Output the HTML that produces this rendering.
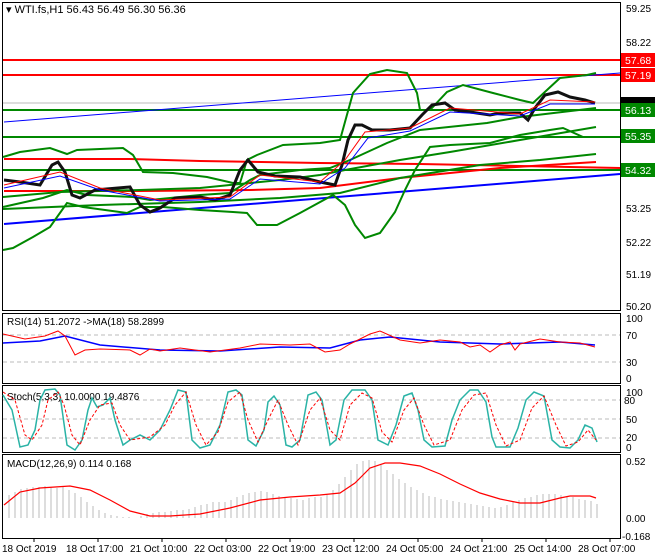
<!DOCTYPE html>
<html><head><meta charset="utf-8"><style>
body{margin:0;background:#fff;}
svg{display:block;font-family:"Liberation Sans",sans-serif;font-size:10px;}
</style></head><body>
<svg width="660" height="560" viewBox="0 0 660 560">
<rect width="660" height="560" fill="#fff"/>
<g fill="none" stroke="#000" stroke-width="1">
<rect x="2.5" y="2.5" width="618" height="308"/>
<rect x="2.5" y="313.5" width="618" height="70"/>
<rect x="2.5" y="385.5" width="618" height="67"/>
<rect x="2.5" y="454.5" width="618" height="84"/>
</g>
<!-- horizontal levels -->
<g stroke-width="2" fill="none">
<line x1="3" y1="60" x2="620" y2="60" stroke="#f00"/>
<line x1="3" y1="75" x2="620" y2="75" stroke="#f00"/>
<line x1="3" y1="110" x2="620" y2="110" stroke="#080"/>
<line x1="3" y1="137" x2="620" y2="137" stroke="#080"/>
<line x1="3" y1="170" x2="620" y2="170" stroke="#080"/>
</g>
<line x1="3" y1="103" x2="620" y2="103" stroke="#bbb"/>
<line x1="4" y1="122" x2="620" y2="73" stroke="#00f" stroke-width="1"/>
<line x1="4" y1="224" x2="620" y2="174" stroke="#00f" stroke-width="2"/>
<polyline fill="none" stroke="#f00" stroke-width="2" points="4,159 130,159 200,161 320,163 420,164 520,166 620,168"/>
<polyline fill="none" stroke="#f00" stroke-width="2" points="4,191 140,191 250,190 320,188 400,178 500,168 596,162"/>
<!-- green MAs / bands -->
<g fill="none" stroke="#080" stroke-width="2">
<polyline points="3,157 20,152 50,148 67,154 77,150 123,148 133,155 143,172 173,173 207,177 233,183 240,183 247,160 257,155 283,145 320,143 340,140 353,93 370,74 387,70 407,73 417,93 420,110 430,110 447,92 463,85 493,93 520,100 533,103 547,90 560,78 587,75 596,73"/>
<polyline points="3,250 13,248 33,237 50,227 67,203 83,207 127,213 140,207 163,207 200,210 233,212 247,213 257,225 277,225 300,213 333,195 345,205 355,225 365,238 380,233 395,212 405,190 415,170 430,147 450,145 490,143 520,135 550,130 563,128 583,137 596,137"/>
<polyline points="3,207 43,198 67,190 87,195 133,197 150,200 200,195 230,193 250,180 260,175 300,170 330,168 350,160 387,143 420,130 487,123 520,117 596,108"/>
<polyline points="3,197 60,192 140,190 200,188 280,180 320,175 345,170 400,160 450,152 520,140 596,127"/>
<polyline points="3,209 100,205 200,202 280,198 340,193 400,178 480,165 540,160 596,154"/>
</g>
<!-- price -->
<polyline fill="none" stroke="#111" stroke-width="3" points="4,180 20,182 40,185 52,165 58,162 65,172 72,195 80,198 95,190 130,187 140,205 150,212 160,208 175,198 200,197 215,200 230,195 240,170 248,160 258,172 275,176 300,177 320,182 335,185 342,165 348,140 355,125 362,125 372,130 390,130 410,128 422,115 432,105 445,103 455,110 470,112 490,115 500,113 520,113 528,120 535,108 545,95 558,92 570,97 585,100 595,103"/>
<polyline fill="none" stroke="#f00" stroke-width="1" points="4,185 60,172 100,188 160,200 230,197 260,175 320,182 345,160 365,132 410,128 450,108 520,114 550,100 595,102"/>
<polyline fill="none" stroke="#00f" stroke-width="1" points="4,188 60,176 100,190 160,201 230,199 260,179 320,184 345,168 368,138 410,131 450,112 520,116 550,104 595,104"/>
<text x="6" y="13" font-size="11">▾ WTI.fs,H1  56.43 56.49 56.30 56.36</text>
<g font-size="10" fill="#000">
<text x="626" y="12">59.25</text><text x="626" y="46">58.22</text>
<text x="626" y="212">53.25</text><text x="626" y="246">52.22</text>
<text x="626" y="278">51.19</text><text x="626" y="310">50.20</text>
</g>
<g font-size="10.5" fill="#fff">
<rect x="621" y="53" width="34" height="14" fill="#f00"/><text x="625" y="64">57.68</text>
<rect x="621" y="68" width="34" height="14" fill="#f00"/><text x="625" y="79">57.19</text>
<rect x="621" y="97" width="34" height="8" fill="#000"/>
<rect x="621" y="103" width="34" height="14" fill="#080"/><text x="625" y="114">56.13</text>
<rect x="621" y="129" width="34" height="14" fill="#080"/><text x="625" y="140">55.35</text>
<rect x="621" y="163" width="34" height="14" fill="#080"/><text x="625" y="174">54.32</text>
</g>
<!-- RSI -->
<g stroke="#bbb" stroke-dasharray="4,3"><line x1="3" y1="335" x2="620" y2="335"/><line x1="3" y1="362" x2="620" y2="362"/>
<line x1="3" y1="400" x2="620" y2="400"/><line x1="3" y1="419" x2="620" y2="419"/><line x1="3" y1="438" x2="620" y2="438"/></g>
<text x="7" y="325">RSI(14) 51.2072  -&gt;MA(18) 58.2899</text>
<polyline fill="none" stroke="#00f" stroke-width="1.5" points="3,343 40,341 65,336 100,345 160,350 220,351 280,347 330,348 360,340 390,337 440,342 500,344 560,342 595,345"/>
<polyline fill="none" stroke="#f00" stroke-width="1" points="3,334 25,339 45,336 58,331 65,336 75,355 85,350 100,349 130,350 140,355 150,349 160,351 180,348 210,352 240,348 260,344 290,345 310,344 325,352 340,350 350,344 370,334 380,331 400,340 420,343 440,340 460,342 470,347 480,345 490,352 500,345 510,342 515,350 520,344 540,339 560,342 580,343 595,347"/>
<g font-size="10"><text x="626" y="322">100</text><text x="626" y="339">70</text><text x="626" y="366">30</text><text x="626" y="382">0</text></g>
<!-- Stoch -->
<text x="7" y="400">Stoch(5,3,3) 10.0000 19.4876</text>
<polyline fill="none" stroke="#2ab3a6" stroke-width="1.5" points="3,395 12,410 20,447 28,445 35,430 40,400 45,390 55,389 60,395 67,445 75,450 82,440 88,410 92,398 97,407 103,405 110,398 115,420 123,445 130,440 140,435 150,440 160,430 170,410 178,390 186,392 192,440 200,448 210,445 220,425 228,392 236,390 242,395 248,440 256,446 264,430 268,402 274,396 280,405 286,445 292,447 300,440 308,395 316,392 322,400 330,445 336,440 344,400 352,390 365,390 372,400 378,440 388,445 396,425 404,396 412,393 418,410 424,440 432,447 445,446 452,420 460,400 470,390 478,390 486,402 492,437 496,447 510,447 518,428 526,400 534,392 544,396 552,440 560,447 570,448 578,440 585,425 592,428 597,442"/>
<polyline fill="none" stroke="#f00" stroke-width="1" stroke-dasharray="3,2" points="3,392 15,400 25,435 32,440 42,425 48,400 58,392 64,405 72,435 80,445 90,420 100,405 112,403 120,425 130,440 150,437 165,425 175,405 186,392 196,425 206,445 218,432 228,402 240,392 248,420 258,442 268,420 278,400 288,425 298,445 310,410 320,398 330,430 340,440 350,405 362,393 372,398 382,432 392,442 404,410 414,398 424,425 434,445 450,440 462,410 474,395 486,393 496,425 506,446 520,440 532,408 544,396 556,425 566,446 578,442 588,430 596,440"/>
<g font-size="10"><text x="626" y="396">100</text><text x="624" y="404">80</text><text x="626" y="423">50</text><text x="626" y="441">20</text><text x="626" y="451">0</text></g>
<!-- MACD -->
<text x="7" y="467">MACD(12,26,9) 0.114 0.168</text>
<path stroke="#bbb" stroke-width="1" fill="none" d="M9 518V495M15 518V492M21 518V489M27 518V488M33 518V487M39 518V487M45 518V486M51 518V487M57 518V488M63 518V487M69 518V490M75 518V493M81 518V497M87 518V502M93 518V506M99 518V510M105 518V513M111 518V515M117 518V516M123 518V517M129 518V517M135 518V518M141 518V516M147 518V514M153 518V513M159 518V512M165 518V512M171 518V511M177 518V510M183 518V510M189 518V509M195 518V507M201 518V505M207 518V504M213 518V502M219 518V502M225 518V502M231 518V500M237 518V497M243 518V495M249 518V493M255 518V492M261 518V491M267 518V492M273 518V494M279 518V496M285 518V497M291 518V498M297 518V499M303 518V500M309 518V498M315 518V497M321 518V497M327 518V495M333 518V490M339 518V484M345 518V477M351 518V470M357 518V464M363 518V461M369 518V460M375 518V461M381 518V465M387 518V470M393 518V474M399 518V479M405 518V483M411 518V487M417 518V490M423 518V493M429 518V496M435 518V497M441 518V499M447 518V500M453 518V501M459 518V502M465 518V503M471 518V504M477 518V505M483 518V506M489 518V507M495 518V508M501 518V507M507 518V505M513 518V502M519 518V500M525 518V498M531 518V497M537 518V495M543 518V494M549 518V494M555 518V494M561 518V495M567 518V497M573 518V497M579 518V499M585 518V500M591 518V501M597 518V504"/>
<polyline fill="none" stroke="#f00" stroke-width="1.2" points="4,505 20,492 40,488 70,486 90,490 110,500 130,511 150,516 170,516 200,514 230,508 260,500 290,497 320,495 340,493 355,483 370,468 385,463 400,463 420,466 440,474 460,484 480,493 500,499 520,503 540,503 560,498 570,496 590,496 596,498"/>
<g font-size="10"><text x="626" y="465">0.52</text><text x="626" y="522">0.00</text><text x="622" y="540">-0.168</text></g>
<g stroke="#000"><line x1="34" y1="538" x2="34" y2="542"/><line x1="98" y1="538" x2="98" y2="542"/><line x1="162" y1="538" x2="162" y2="542"/><line x1="226" y1="538" x2="226" y2="542"/><line x1="290" y1="538" x2="290" y2="542"/><line x1="354" y1="538" x2="354" y2="542"/><line x1="418" y1="538" x2="418" y2="542"/><line x1="482" y1="538" x2="482" y2="542"/><line x1="546" y1="538" x2="546" y2="542"/><line x1="610" y1="538" x2="610" y2="542"/></g>
<g font-size="10"><text x="2" y="552">18 Oct 2019</text><text x="66" y="552">18 Oct 17:00</text><text x="130" y="552">21 Oct 10:00</text><text x="194" y="552">22 Oct 03:00</text><text x="258" y="552">22 Oct 19:00</text><text x="322" y="552">23 Oct 12:00</text><text x="386" y="552">24 Oct 05:00</text><text x="450" y="552">24 Oct 21:00</text><text x="514" y="552">25 Oct 14:00</text><text x="578" y="552">28 Oct 07:00</text></g>
</svg>
</body></html>
